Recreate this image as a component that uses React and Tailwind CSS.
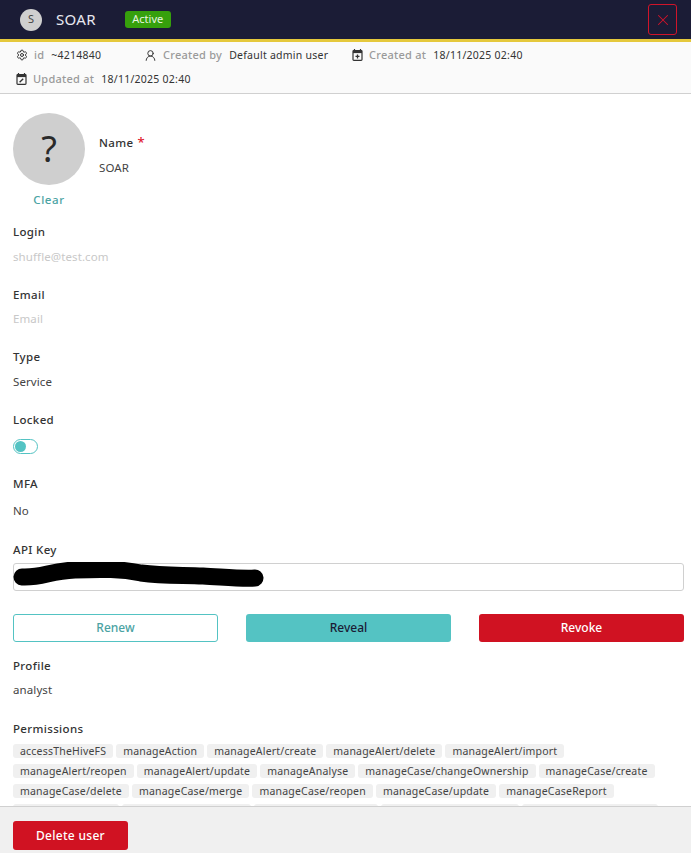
import { Settings, UserRound, X } from 'lucide-react';

const permissionRows = [
    ['accessTheHiveFS', 'manageAction', 'manageAlert/create', 'manageAlert/delete', 'manageAlert/import'],
    ['manageAlert/reopen', 'manageAlert/update', 'manageAnalyse', 'manageCase/changeOwnership', 'manageCase/create'],
    ['manageCase/delete', 'manageCase/merge', 'manageCase/reopen', 'manageCase/update', 'manageCaseReport'],
    ['manageComment', 'manageConfig/update', 'manageCustomEvent', 'manageFunction/invoke', 'manageKnowledgeBase'],
];

const CalendarIcon = ({ variant }) => (
    <svg width="11" height="12" viewBox="0 0 11 12" className="shrink-0 text-[#333]">
        <path d="M2.5 0v2M8.5 0v2" stroke="currentColor" strokeWidth="1.2" />
        <rect x="1" y="1.5" width="9" height="9.8" rx="0.8" fill="none" stroke="currentColor" strokeWidth="1.2" />
        <rect x="1" y="1.5" width="9" height="2.6" fill="currentColor" />
        {variant === 'plus' ? (
            <path d="M5.5 5.4v4M3.5 7.4h4" stroke="currentColor" strokeWidth="1.3" />
        ) : (
            <path d="M3.6 9.2l3.6-3.4" stroke="currentColor" strokeWidth="1.4" />
        )}
    </svg>
);

const MetaItem = ({ icon, label, value, className = '' }) => (
    <div className={`flex items-center h-[14px] ${className}`}>
        {icon}
        <div className="flex items-baseline">
            <span className="ml-[6px] text-[11px] font-medium tracking-[0.25px] text-[#9a9a9a]">{label}</span>
            <span className="ml-[7px] text-[10.5px] tracking-[0.25px] text-[#333]">{value}</span>
        </div>
    </div>
);

const Field = ({ label, required, children, className = '' }) => (
    <div className={className}>
        <div className="h-5 leading-5 text-[11.5px] font-medium text-[#333] tracking-[0.35px]">
            {label}
            {required && <span className="ml-1 text-[13px] leading-none text-[#e0182e]">*</span>}
        </div>
        {children}
    </div>
);

const Value = ({ children, muted }) => (
    <div className={`mt-[5px] h-5 leading-5 text-[11.5px] tracking-[0.1px] ${muted ? 'text-[#c8c8c8]' : 'text-[#444]'}`}>{children}</div>
);

const App = () => {
    return (
        <div className="h-[853px] w-[691px] flex flex-col bg-white overflow-hidden font-['Noto_Sans',sans-serif]">
            <header className="h-[42px] shrink-0 flex items-center bg-[#1b1c36] border-b-[3px] border-[#e5c83c] pl-5 pr-[14px]">
                <div className="w-[22px] h-[22px] rounded-full bg-[#cfcfcf] flex items-center justify-center text-[11px] text-[#444]">S</div>
                <span className="ml-[14px] text-[15px] tracking-[0.3px] text-[#e8e8f0]">SOAR</span>
                <span className="ml-[29px] h-[17px] w-[46px] rounded-[3px] bg-[#36a00c] flex items-center justify-center text-[11px] text-[#e8f5e0]">Active</span>
                <button className="ml-auto w-[29px] h-[31px] rounded-[3px] border border-[#d0142a] flex items-center justify-center text-[#d0142a]">
                    <X size={18} strokeWidth={1.4} />
                </button>
            </header>

            <div className="h-[52px] shrink-0 bg-[#fafafa] border-b border-[#d0d0d0] pl-4 pt-[6px]">
                <div className="flex items-center">
                    <MetaItem icon={<Settings size={12} strokeWidth={2} className="text-[#333]" />} label="id" value="~4214840" className="w-[128px]" />
                    <MetaItem icon={<UserRound size={13} strokeWidth={1.8} className="text-[#333]" />} label="Created by" value="Default admin user" className="w-[208px]" />
                    <MetaItem icon={<CalendarIcon variant="plus" />} label="Created at" value="18/11/2025 02:40" />
                </div>
                <MetaItem icon={<CalendarIcon variant="edit" />} label="Updated at" value="18/11/2025 02:40" className="mt-[10px]" />
            </div>

            <main className="flex-1 min-h-0 overflow-hidden pl-[13px] pr-[7px] pt-[19px]">
                <div className="flex">
                    <div className="w-[72px] flex flex-col items-center">
                        <div className="w-[72px] h-[72px] rounded-full bg-[#cfcfcf] flex items-center justify-center text-[36px] text-[#2a2a2a]">?</div>
                        <span className="mt-[7px] h-4 leading-4 text-[11.5px] font-medium text-[#4ba3a3] tracking-[0.6px]">Clear</span>
                    </div>
                    <Field label="Name" required className="ml-[14px] mt-5">
                        <Value>SOAR</Value>
                    </Field>
                </div>

                <Field label="Login" className="mt-[14px]"><Value muted>shuffle@test.com</Value></Field>
                <Field label="Email" className="mt-[18px]"><div className="-mt-px"><Value muted>Email</Value></div></Field>
                <Field label="Type" className="mt-[18px]"><Value>Service</Value></Field>
                <Field label="Locked" className="mt-[18px]">
                    <div className="mt-[9px] w-[25px] h-[15px] rounded-full border border-[#54c3c3] flex items-center pl-[1px]">
                        <span className="w-[11px] h-[11px] rounded-full bg-[#54c3c3]" />
                    </div>
                </Field>
                <Field label="MFA" className="mt-[20px]"><div className="mt-[7px]"><Value>No</Value></div></Field>

                <Field label="API Key" className="mt-[19px]">
                    <div className="relative h-[28px] rounded-[3px] border border-[#d0d0d0] mt-[3px]">
                        <svg width="264" height="30" viewBox="0 0 264 30" className="absolute left-[-1px] top-[-2px]">
                            <path d="M9 15C30 16 36 9 62 8C90 7 108 7 128 11C150 14 170 13 190 14C210 15 230 17 242 16" fill="none" stroke="#000" strokeWidth="17" strokeLinecap="round" />
                        </svg>
                    </div>
                </Field>

                <div className="mt-[23px] grid grid-cols-3 gap-[28px]">
                    <button className="h-[28px] rounded-[3px] border border-[#54c3c3] text-xs font-medium text-[#4ba3a3]">Renew</button>
                    <button className="h-[28px] rounded-[3px] bg-[#54c3c3] text-xs font-medium text-[#1b1c36]">Reveal</button>
                    <button className="h-[28px] rounded-[3px] bg-[#d01222] text-xs font-medium text-white">Revoke</button>
                </div>

                <Field label="Profile" className="mt-[14px]"><div className="-mt-px"><Value>analyst</Value></div></Field>
                <Field label="Permissions" className="mt-[19px]">
                    <div className="mt-[5px] flex flex-col gap-[6px]">
                        {permissionRows.map((row) => (
                            <div key={row[0]} className="flex gap-[3px]">
                                {row.map((permission) => (
                                    <span key={permission} className="h-[14px] leading-[14px] rounded-[3px] bg-[#f0f0f0] px-[7px] text-[10.5px] tracking-[0.2px] text-[#444]">
                                        {permission}
                                    </span>
                                ))}
                            </div>
                        ))}
                    </div>
                </Field>
            </main>

            <footer className="h-[47px] shrink-0 bg-[#f0f0f0] border-t border-[#d0d0d0] pl-[13px] pt-[14px]">
                <button className="w-[115px] h-[29px] rounded-[3px] bg-[#d01222] text-xs font-medium text-white tracking-[0.3px]">Delete user</button>
            </footer>
        </div>
    );
};

export default App;
